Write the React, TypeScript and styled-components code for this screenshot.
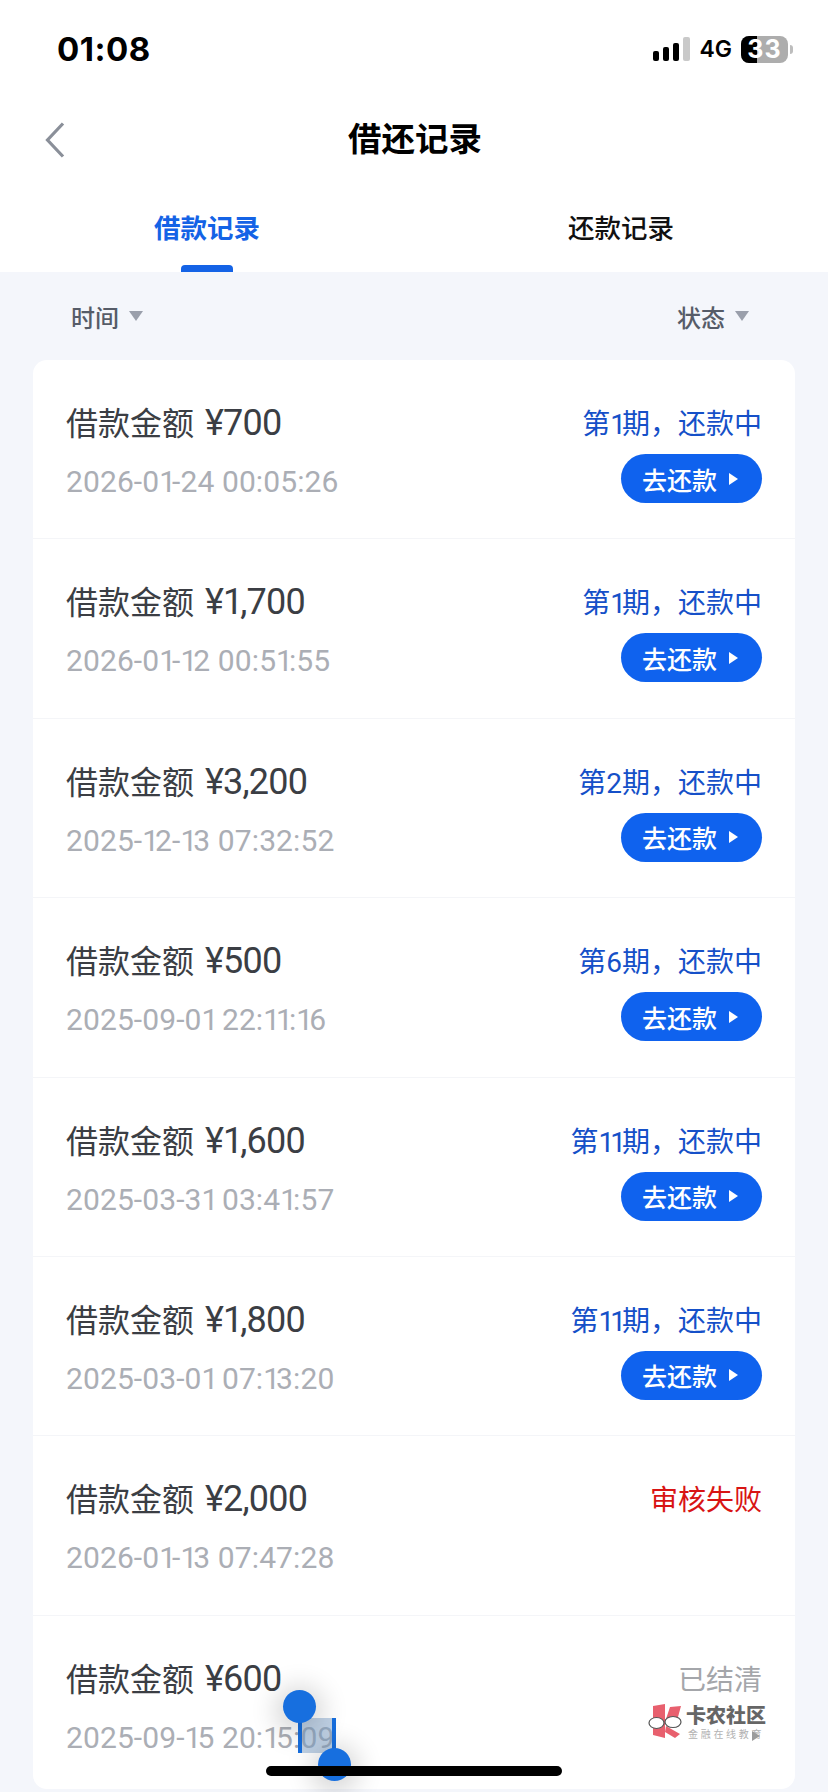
import React from "react";
import styled, { createGlobalStyle } from "styled-components";

const CJK = `Roboto, "Noto Sans CJK SC", sans-serif`;

const Global = createGlobalStyle`
  html, body { margin: 0; padding: 0; background: #f4f6fb; }
  body { width: 828px; height: 1792px; overflow: hidden; font-family: ${CJK}; }
  * { box-sizing: border-box; }
`;

const Page = styled.div`
  position: relative;
  width: 828px;
  height: 1792px;
  overflow: hidden;
  background: #f4f6fb;
`;

const Head = styled.header`
  background: #fff;
  height: 272px;
  display: flex;
  flex-direction: column;
`;

const StatusBar = styled.div`
  height: 98px;
  padding: 0 35px 0 57px;
  display: flex;
  align-items: center;
  justify-content: space-between;
`;

const Clock = styled.span`
  font-family: Inter, sans-serif;
  font-weight: 700;
  font-size: 33px;
  letter-spacing: 0.5px;
  color: #000;
`;

const StatusIcons = styled.div`
  display: flex;
  align-items: center;
`;

const Network = styled.span`
  font-family: Inter, sans-serif;
  font-weight: 600;
  font-size: 23px;
  color: #000;
  margin: 0 9px 0 9px;
`;

const Battery = styled.div`
  position: relative;
  width: 47px;
  height: 27px;
  border-radius: 8px;
  overflow: hidden;
  background: #adadad;
  display: flex;
  align-items: center;
  justify-content: center;
  font-family: Inter, sans-serif;
  font-weight: 700;
  font-size: 25px;
  letter-spacing: 1px;
  color: #fff;
`;

const BatteryFill = styled.div`
  position: absolute;
  left: 0;
  top: 0;
  bottom: 0;
  background: #000;
`;

const BatteryText = styled.span`
  position: relative;
`;

const BatteryNub = styled.div`
  width: 3px;
  height: 9px;
  margin-left: 2px;
  border-radius: 0 3px 3px 0;
  background: #bdbdbd;
`;

const NavBar = styled.div`
  height: 84px;
  padding: 0 0 7px 45px;
  position: relative;
  display: flex;
  align-items: center;
  justify-content: center;
`;

const Back = styled.svg`
  position: absolute;
  left: 45px;
  top: 24px;
`;

const Title = styled.h1`
  margin: 0 43px 0 0;
  font-size: 33.5px;
  font-weight: 700;
  color: #000;
`;

const Tabs = styled.div`
  flex: 1;
  display: grid;
  grid-template-columns: 1fr 1fr;
`;

const Tab = styled.div<{ $active?: boolean }>`
  position: relative;
  padding-top: 27px;
  text-align: center;
  font-size: 26.5px;
  line-height: 40px;
  font-weight: ${(p) => (p.$active ? 700 : 500)};
  color: ${(p) => (p.$active ? "#1463e6" : "#111")};
  ${(p) =>
    p.$active &&
    `&::after {
      content: "";
      position: absolute;
      left: 181px;
      bottom: 0;
      width: 52px;
      height: 7px;
      border-radius: 4px 4px 0 0;
      background: #1463e6;
    }`}
`;

const Filters = styled.div`
  height: 88px;
  padding: 0 79px 0 71px;
  display: flex;
  align-items: center;
  justify-content: space-between;
`;

const Filter = styled.div`
  display: flex;
  align-items: center;
  gap: 10px;
  font-size: 24px;
  font-weight: 500;
  color: #565c68;
`;

const Caret = styled.i`
  width: 0;
  height: 0;
  border-left: 7px solid transparent;
  border-right: 7px solid transparent;
  border-top: 10px solid #9a9fab;
`;

const Card = styled.section`
  margin: 0 33px;
  height: 1429px;
  background: #fff;
  border-radius: 14px;
  overflow: hidden;
`;

const Row = styled.article`
  height: 179.4px;
  padding: 41px 33px 0;
  display: flex;
  justify-content: space-between;
  border-bottom: 1.5px solid #f4f5f8;
  &:last-child { border-bottom: 0; }
`;

const Left = styled.div`
  display: flex;
  flex-direction: column;
`;

const Amount = styled.div`
  font-size: 32px;
  line-height: 44px;
  color: #3b3e44;
`;

const Figure = styled.span`
  font-size: 36px;
  letter-spacing: -0.8px;
  margin-left: 3px;
`;

const DateText = styled.div`
  margin-top: 16px;
  font-size: 30px;
  line-height: 40px;
  letter-spacing: 0.1px;
  color: #abaeb5;
`;

/* the original's DIN-like face has a much narrower "1" than Roboto */
const NarrowOne = styled.span<{ $pull: number }>`
  letter-spacing: ${(p) => p.$pull}px;
`;

const Right = styled.div`
  display: flex;
  flex-direction: column;
  align-items: flex-end;
`;

const Status = styled.div<{ $tone: "blue" | "red" | "gray" }>`
  margin-top: 2px;
  font-size: 28px;
  line-height: 44px;
  color: ${(p) =>
    p.$tone === "blue" ? "#1550c8" : p.$tone === "red" ? "#d81414" : "#a4a6aa"};
`;

const PayButton = styled.div`
  margin-top: 7px;
  width: 141px;
  height: 49px;
  border-radius: 25px;
  background: #0f62ee;
  color: #fff;
  font-size: 25px;
  font-weight: 500;
  display: flex;
  align-items: center;
  padding-left: 21px;
  gap: 12px;
`;

const PlayCaret = styled.i`
  width: 0;
  height: 0;
  border-top: 6px solid transparent;
  border-bottom: 6px solid transparent;
  border-left: 9px solid #fff;
`;

const Watermark = styled.div`
  position: absolute;
  left: 648px;
  top: 1704px;
  width: 118px;
  height: 40px;
  display: flex;
  gap: 3px;
`;

const MarkText = styled.div`
  display: flex;
  flex-direction: column;
`;

const MarkName = styled.span`
  font-size: 20px;
  line-height: 24px;
  font-weight: 900;
  color: #666;
  white-space: nowrap;
`;

const MarkSub = styled.span`
  font-size: 10px;
  line-height: 13px;
  letter-spacing: 2.7px;
  margin-left: 2px;
  color: #b2b2b2;
  white-space: nowrap;
`;

const MarkPlay = styled.i`
  position: absolute;
  left: 104px;
  top: 27px;
  border-top: 5px solid transparent;
  border-bottom: 5px solid transparent;
  border-left: 8px solid #9b9b9b;
`;

const Selection = styled.div`
  position: absolute;
  left: 302px;
  top: 1718px;
  width: 30px;
  height: 35px;
  background: rgba(130, 165, 205, 0.5);
`;

const Cursor = styled.div<{ $x: number; $y: number; $h: number }>`
  position: absolute;
  left: ${(p) => p.$x}px;
  top: ${(p) => p.$y}px;
  width: 4px;
  height: ${(p) => p.$h}px;
  background: #176fdf;
`;

const Knob = styled.div<{ $x: number; $y: number }>`
  position: absolute;
  left: ${(p) => p.$x}px;
  top: ${(p) => p.$y}px;
  width: 33px;
  height: 33px;
  border-radius: 50%;
  background: #176fdf;
  box-shadow: 0 4px 26px 8px rgba(0, 0, 0, 0.16);
`;

const HomeBar = styled.div`
  position: absolute;
  left: 266px;
  top: 1766px;
  width: 296px;
  height: 10px;
  border-radius: 5px;
  background: #000;
`;

function Din({ text, pull }: { text: string; pull: number }) {
  return (
    <>
      {text.split(/(1)/).map((part, i) =>
        part === "1" ? (
          <NarrowOne key={i} $pull={pull}>
            1
          </NarrowOne>
        ) : (
          part
        )
      )}
    </>
  );
}

type Item = { amount: string; date: string; status: string; tone: "blue" | "red" | "gray"; pay?: boolean };

const items: Item[] = [
  { amount: "¥700", date: "2026-01-24 00:05:26", status: "第1期，还款中", tone: "blue", pay: true },
  { amount: "¥1,700", date: "2026-01-12 00:51:55", status: "第1期，还款中", tone: "blue", pay: true },
  { amount: "¥3,200", date: "2025-12-13 07:32:52", status: "第2期，还款中", tone: "blue", pay: true },
  { amount: "¥500", date: "2025-09-01 22:11:16", status: "第6期，还款中", tone: "blue", pay: true },
  { amount: "¥1,600", date: "2025-03-31 03:41:57", status: "第11期，还款中", tone: "blue", pay: true },
  { amount: "¥1,800", date: "2025-03-01 07:13:20", status: "第11期，还款中", tone: "blue", pay: true },
  { amount: "¥2,000", date: "2026-01-13 07:47:28", status: "审核失败", tone: "red" },
  { amount: "¥600", date: "2025-09-15 20:15:09", status: "已结清", tone: "gray" },
];

export default function App() {
  return (
    <Page>
      <Global />
      <Head>
        <StatusBar>
          <Clock>01:08</Clock>
          <StatusIcons>
            <svg width="37" height="24" viewBox="0 0 37 24">
              <rect x="0" y="14" width="6" height="10" rx="2" fill="#000" />
              <rect x="10" y="10" width="6" height="14" rx="2" fill="#000" />
              <rect x="20" y="6" width="6" height="18" rx="2" fill="#000" />
              <rect x="30" y="0" width="7" height="24" rx="2" fill="#c9c9c9" />
            </svg>
            <Network>4G</Network>
            <Battery>
              <BatteryFill style={{ width: "33%" }} />
              <BatteryText>33</BatteryText>
            </Battery>
            <BatteryNub />
          </StatusIcons>
        </StatusBar>
        <NavBar>
          <Back width="20" height="36" viewBox="0 0 20 36" fill="none">
            <path d="M18 1.5 L2.5 18 L18 34.5" stroke="#8a8f99" strokeWidth="3.2" />
          </Back>
          <Title>借还记录</Title>
        </NavBar>
        <Tabs>
          <Tab $active>借款记录</Tab>
          <Tab>还款记录</Tab>
        </Tabs>
      </Head>
      <Filters>
        <Filter>
          时间
          <Caret />
        </Filter>
        <Filter>
          状态
          <Caret />
        </Filter>
      </Filters>
      <Card>
        {items.map((it) => (
          <Row key={it.date}>
            <Left>
              <Amount>
                借款金额{" "}
                <Figure>
                  <Din text={it.amount} pull={-3} />
                </Figure>
              </Amount>
              <DateText>
                <Din text={it.date} pull={-4} />
              </DateText>
            </Left>
            <Right>
              <Status $tone={it.tone}>
                <Din text={it.status} pull={-4} />
              </Status>
              {it.pay && (
                <PayButton>
                  去还款
                  <PlayCaret />
                </PayButton>
              )}
            </Right>
          </Row>
        ))}
      </Card>
      <Watermark>
        <svg width="35" height="36" viewBox="0 0 35 36" style={{ flex: "none" }}>
          <path d="M5 2 L17 0 V34 L5 31 Z" fill="#e8606e" />
          <path d="M22 3 L33 2 L30 13 L18 15 Z" fill="#e8606e" />
          <path d="M18 22 L32 30 L27 34 L17 28 Z" fill="#e8606e" />
          <ellipse cx="8.5" cy="19" rx="7.5" ry="5.5" fill="#fff" stroke="#555" strokeWidth="1.2" />
          <ellipse cx="25" cy="18" rx="8" ry="5.5" fill="#fff" stroke="#555" strokeWidth="1.2" />
        </svg>
        <MarkText>
          <MarkName>卡农社区</MarkName>
          <MarkSub>金融在线教育</MarkSub>
        </MarkText>
        <MarkPlay />
      </Watermark>
      <Selection />
      <Cursor $x={298} $y={1720} $h={33} />
      <Cursor $x={332} $y={1718} $h={40} />
      <Knob $x={283} $y={1690} />
      <Knob $x={318} $y={1748} />
      <HomeBar />
    </Page>
  );
}
